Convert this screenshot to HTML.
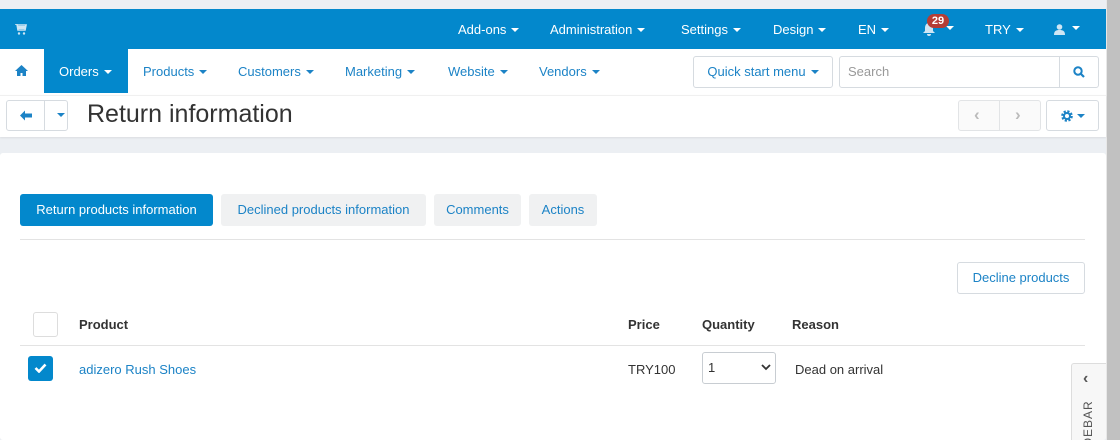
<!DOCTYPE html>
<html><head><style>
*{box-sizing:border-box;margin:0;padding:0}
html{width:1120px;height:440px;overflow:hidden}
body{width:1120px;height:440px;overflow:hidden;background:#eceff3;font-family:"Liberation Sans",sans-serif;font-size:13px;position:relative}
.sb{position:absolute;right:0;top:0;width:14px;height:440px;background:#c1c1c1;border-left:1px solid #e8e8e8}
.top{position:absolute;left:0;top:9px;width:1106px;height:40px;background:#0388cc;color:#fff}
.top span{position:absolute;top:13px;font-size:13px}
.car{display:inline-block;border-left:4px solid transparent;border-right:4px solid transparent;border-top:4px solid currentColor;vertical-align:middle;margin-left:5px;margin-top:-2px}
.nav{position:absolute;left:0;top:49px;width:1106px;height:46px;background:#fff;color:#1c83c6}
.nav span{position:absolute;top:15px}
.tb{position:absolute;left:0;top:95px;width:1106px;height:42px;background:#fff;border-top:1px solid #f0f0f0;box-shadow:0 1px 2px rgba(0,0,0,.08)}
.btn{position:absolute;border:1px solid #d6dbe0;border-radius:3px;background:#fff}
.card{position:absolute;left:0;top:153px;width:1106px;height:287px;background:#fff;border-radius:3px;overflow:hidden}
.tab{position:absolute;top:41px;height:32px;line-height:32px;text-align:center;border-radius:3px;background:#f0f1f2;color:#1c83c6}
</style></head><body>
<div class="sb"></div>
<div class="top">
<svg style="position:absolute;left:15px;top:15px" width="12" height="11" viewBox="0 0 12 11"><path d="M0 0h2l1 6h7l1-5H3" fill="none" stroke="#cfe6f4" stroke-width="1.6"/><rect x="3" y="2" width="7" height="3" fill="#cfe6f4"/><circle cx="4" cy="9.5" r="1.2" fill="#cfe6f4"/><circle cx="9" cy="9.5" r="1.2" fill="#cfe6f4"/></svg>
<span style="left:458px">Add-ons<i class="car"></i></span>
<span style="left:550px">Administration<i class="car"></i></span>
<span style="left:681px">Settings<i class="car"></i></span>
<span style="left:773px">Design<i class="car"></i></span>
<span style="left:858px">EN<i class="car"></i></span>
<svg style="position:absolute;left:923px;top:14px" width="12" height="13" viewBox="0 0 12 13"><path d="M6 0C3 0 2 3 2 5v3L0 10h12l-2-2V5C10 3 9 0 6 0z M4 11a2 2 0 004 0z" fill="#cfe6f4"/></svg>
<i class="car" style="position:absolute;left:941px;top:19px"></i>
<div style="position:absolute;left:927px;top:5px;width:22px;height:14px;border-radius:7px;background:#b53d35;font-size:11px;font-weight:bold;text-align:center;line-height:14px">29</div>
<span style="left:985px">TRY<i class="car"></i></span>
<svg style="position:absolute;left:1054px;top:15px" width="11" height="11" viewBox="0 0 11 11"><circle cx="5.5" cy="3" r="2.8" fill="#cfe6f4"/><path d="M0 11c0-4 2-5 5.5-5s5.5 1 5.5 5z" fill="#cfe6f4"/></svg>
<i class="car" style="position:absolute;left:1067px;top:19px"></i>
</div>
<div class="nav">
<svg style="position:absolute;left:15px;top:16px" width="13" height="11" viewBox="0 0 13 11"><path d="M6.5 0L0 6h2v5h3.5V8h2v3H11V6h2z" fill="#1c83c6"/></svg>
<div style="position:absolute;left:44px;top:0;width:84px;height:44px;background:#0388cc"></div>
<span style="left:59px;color:#fff">Orders<i class="car"></i></span>
<span style="left:143px">Products<i class="car"></i></span>
<span style="left:238px">Customers<i class="car"></i></span>
<span style="left:345px">Marketing<i class="car"></i></span>
<span style="left:448px">Website<i class="car"></i></span>
<span style="left:539px">Vendors<i class="car"></i></span>
<div class="btn" style="left:693px;top:7px;width:140px;height:32px;line-height:30px;text-align:center;color:#1c83c6">Quick start menu<i class="car"></i></div>
<div class="btn" style="left:839px;top:7px;width:260px;height:32px;line-height:30px;padding-left:8px;color:#999">Search</div>
<div style="position:absolute;left:1059px;top:8px;width:1px;height:30px;background:#d6dbe0"></div>
<svg style="position:absolute;left:1073px;top:17px" width="12" height="12" viewBox="0 0 12 12"><circle cx="5" cy="5" r="3.7" fill="none" stroke="#1c83c6" stroke-width="2"/><path d="M7.5 7.5L11 11" stroke="#1c83c6" stroke-width="2.2"/></svg>
</div>
<div class="tb">
<div class="btn" style="left:6px;top:4px;width:62px;height:31px"></div>
<div style="position:absolute;left:44px;top:5px;width:1px;height:30px;background:#d6dbe0"></div>
<svg style="position:absolute;left:20px;top:14px" width="12" height="11" viewBox="0 0 12 11"><path d="M0 5.5L5 0.5v3h7v4H5v3z" fill="#1c83c6"/></svg>
<i class="car" style="position:absolute;left:52px;top:19px;color:#1c83c6"></i>
<div style="position:absolute;left:87px;top:4px;font-size:25px;color:#333">Return information</div>
<div class="btn" style="left:958px;top:4px;width:83px;height:31px;background:#fafafa;border-color:#e2e4e6"></div>
<div style="position:absolute;left:999px;top:5px;width:1px;height:30px;background:#e2e4e6"></div>
<div style="position:absolute;left:974px;top:9px;color:#bbb;font-size:17px;font-weight:bold">&lsaquo;</div>
<div style="position:absolute;left:1015px;top:9px;color:#bbb;font-size:17px;font-weight:bold">&rsaquo;</div>
<div class="btn" style="left:1046px;top:4px;width:53px;height:31px"></div>
<svg style="position:absolute;left:1061px;top:14px" width="12" height="12" viewBox="0 0 12 12"><circle cx="6" cy="6" r="4.3" fill="none" stroke="#1c83c6" stroke-width="3" stroke-dasharray="2 1.4"/><circle cx="6" cy="6" r="3" fill="none" stroke="#1c83c6" stroke-width="2"/></svg>
<i class="car" style="position:absolute;left:1072px;top:20px;color:#1c83c6"></i>
</div>
<div class="card">
<div class="tab" style="left:20px;width:193px;background:#0388cc;color:#fff">Return products information</div>
<div class="tab" style="left:221px;width:205px">Declined products information</div>
<div class="tab" style="left:434px;width:87px">Comments</div>
<div class="tab" style="left:529px;width:68px">Actions</div>
<div style="position:absolute;left:20px;top:86px;width:1065px;height:1px;background:#e3e3e3"></div>
<div class="btn" style="left:957px;top:109px;width:128px;height:32px;line-height:30px;text-align:center;color:#1c83c6">Decline products</div>
<div style="position:absolute;left:33px;top:159px;width:25px;height:25px;border:1px solid #ddd;border-radius:3px"></div>
<div style="position:absolute;left:79px;top:164px;font-weight:bold;color:#333">Product</div>
<div style="position:absolute;left:628px;top:164px;font-weight:bold;color:#333">Price</div>
<div style="position:absolute;left:702px;top:164px;font-weight:bold;color:#333">Quantity</div>
<div style="position:absolute;left:792px;top:164px;font-weight:bold;color:#333">Reason</div>
<div style="position:absolute;left:20px;top:192px;width:1065px;height:1px;background:#e3e3e3"></div>
<div style="position:absolute;left:28px;top:203px;width:25px;height:25px;background:#0388cc;border-radius:3px"></div>
<svg style="position:absolute;left:34px;top:210px" width="13" height="10" viewBox="0 0 13 10"><path d="M1.5 5l3.5 3.5L11.5 1.5" fill="none" stroke="#fff" stroke-width="2.6"/></svg>
<div style="position:absolute;left:79px;top:209px;color:#1c83c6">adizero Rush Shoes</div>
<div style="position:absolute;left:628px;top:209px;color:#333">TRY100</div>
<div class="btn" style="left:702px;top:199px;width:74px;height:32px;border-color:#c8cdd2;line-height:30px;padding-left:5px;color:#333">1
<svg style="position:absolute;right:4px;top:11px" width="10" height="7" viewBox="0 0 10 7"><path d="M1 1l4 4 4-4" fill="none" stroke="#333" stroke-width="1.8"/></svg></div>
<div style="position:absolute;left:795px;top:209px;color:#333">Dead on arrival</div>
<div style="position:absolute;left:1071px;top:210px;width:35px;height:100px;background:#f7f7f7;border:1px solid #ddd;border-right:none;border-radius:3px 0 0 0"></div>
<div style="position:absolute;left:1083px;top:217px;color:#555;font-weight:bold;font-size:16px">&lsaquo;</div>
<div style="position:absolute;left:1081px;top:307px;transform:rotate(-90deg);transform-origin:left top;color:#555;font-size:12px;letter-spacing:1px;white-space:nowrap">SIDEBAR</div>
</div>
</body></html>
